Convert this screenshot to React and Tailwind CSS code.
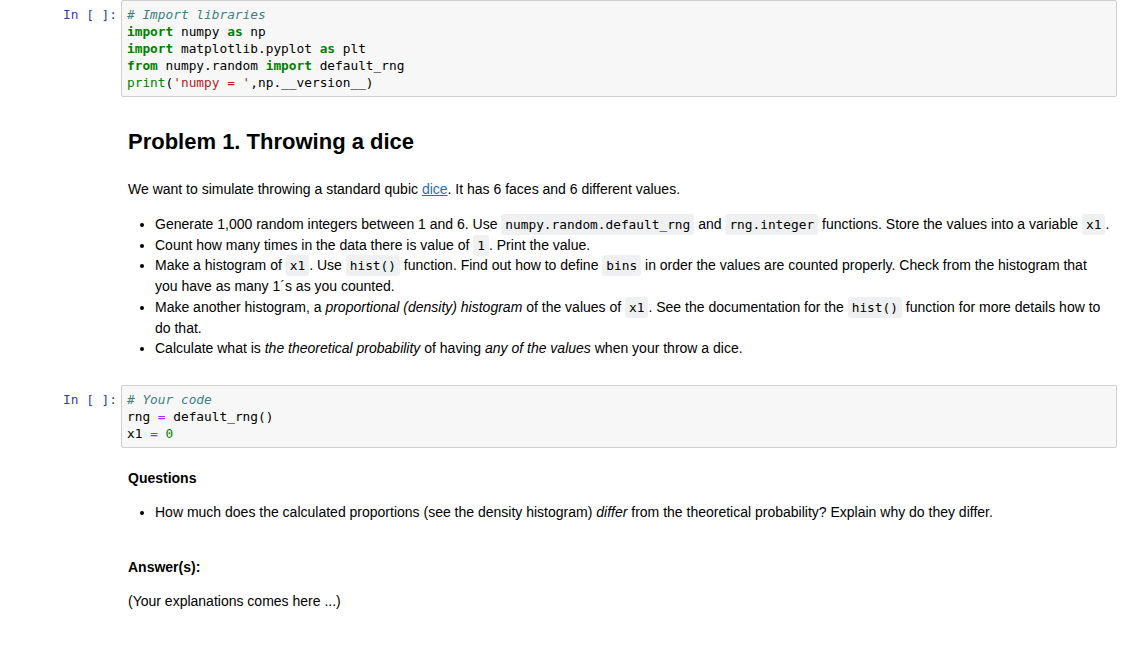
import React from 'react';

const mono = "font-['DejaVu_Sans_Mono',monospace]";
const sans = "font-['Liberation_Sans',Arial,sans-serif]";

function Prompt() {
  return (
    <div className={`w-[121px] shrink-0 pr-[4px] pt-[6px] text-right text-[12.8px] leading-[17px] text-[#303f9f] ${mono}`}>
      In&nbsp;[&nbsp;]:
    </div>
  );
}

function CodeCell({ children }) {
  return (
    <div className="flex">
      <Prompt />
      <div className={`mr-[20px] flex-1 rounded-[2px] border border-[#cfcfcf] bg-[#f7f7f7] px-[5px] py-[5px] text-[12.8px] leading-[17px] text-black whitespace-pre ${mono}`}>
        {children}
      </div>
    </div>
  );
}

const Kw = ({ children }) => <span className="font-bold text-[#008000]">{children}</span>;
const Cm = ({ children }) => <span className="italic text-[#408080]">{children}</span>;
const Op = ({ children }) => <span className="text-[#aa22ff]">{children}</span>;

function Code({ children }) {
  return (
    <code className={`rounded-[3px] bg-[#eff0f1] px-[4px] py-[3px] text-[12.8px] leading-[1] text-black ${mono}`}>{children}</code>
  );
}

function Markdown({ children, className = '' }) {
  return (
    <div className={`ml-[128px] mr-[20px] text-[14px] text-black ${sans} ${className}`}>{children}</div>
  );
}

export default function App() {
  return (
    <div className="min-h-[647px] bg-white">
      <CodeCell>
        <div><Cm># Import libraries</Cm></div>
        <div><Kw>import</Kw> numpy <Kw>as</Kw> np</div>
        <div><Kw>import</Kw> matplotlib.pyplot <Kw>as</Kw> plt</div>
        <div><Kw>from</Kw> numpy.random <Kw>import</Kw> default_rng</div>
        <div><span className="text-[#008000]">print</span>(<span className="text-[#ba2121]">'numpy = '</span>,np.__version__)</div>
      </CodeCell>

      <Markdown className="pt-[32px]">
        <h2 className="text-[22px] font-bold leading-[26px]">Problem 1. Throwing a dice</h2>
        <p className="mt-[25px] leading-[18px]">
          We want to simulate throwing a standard qubic <span className="text-[#296eaa] underline">dice</span>. It has 6 faces and 6 different values.
        </p>
        <ul className="mt-[16px] list-disc pl-[27px] leading-[20.7px]">
          <li className="whitespace-nowrap">Generate 1,000 random integers between 1 and 6. Use <Code>numpy.random.default_rng</Code> and <Code>rng.integer</Code> functions. Store the values into a variable <Code>x1</Code>.</li>
          <li>Count how many times in the data there is value of <Code>1</Code>. Print the value.</li>
          <li className="whitespace-nowrap">Make a histogram of <Code>x1</Code>. Use <Code>hist()</Code> function. Find out how to define <Code>bins</Code> in order the values are counted properly. Check from the histogram that<br />you have as many 1´s as you counted.</li>
          <li className="whitespace-nowrap">Make another histogram, a <i>proportional (density) histogram</i> of the values of <Code>x1</Code>. See the documentation for the <Code>hist()</Code> function for more details how to<br />do that.</li>
          <li>Calculate what is <i>the theoretical probability</i> of having <i>any of the values</i> when your throw a dice.</li>
        </ul>
      </Markdown>

      <div className="mt-[26px]">
        <CodeCell>
          <div><Cm># Your code</Cm></div>
          <div>rng <Op>=</Op> default_rng()</div>
          <div>x1 <Op>=</Op> <span className="text-[#008000]">0</span></div>
        </CodeCell>
      </div>

      <Markdown className="pt-[21px]">
        <p className="font-bold leading-[18px]">Questions</p>
        <ul className="mt-[16px] list-disc pl-[27px] leading-[18px]">
          <li>How much does the calculated proportions (see the density histogram) <i>differ</i> from the theoretical probability? Explain why do they differ.</li>
        </ul>
        <p className="mt-[37px] font-bold leading-[18px]">Answer(s):</p>
        <p className="mt-[16px] leading-[18px]">(Your explanations comes here ...)</p>
      </Markdown>
    </div>
  );
}
